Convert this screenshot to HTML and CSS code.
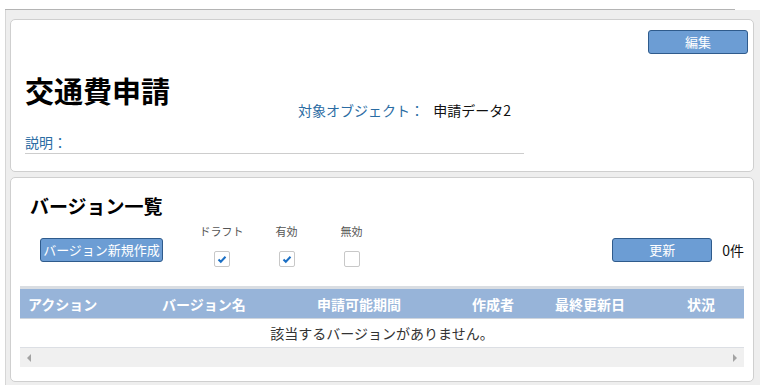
FILE: index.html
```html
<!DOCTYPE html>
<html lang="ja">
<head>
    <meta charset="UTF-8">
    <title>交通費申請</title>
    <link rel="stylesheet" href="styles.css">
</head>
<body>
    <div class="topline"></div>
    <div class="page">
        <div class="card detail">
            <div class="detail-actions">
                <button class="btn">編集</button>
            </div>
            <div class="detail-head">
                <h1 class="title">交通費申請</h1>
                <div class="target">
                    <span class="label">対象オブジェクト：</span>
                    <span class="value">申請データ2</span>
                </div>
            </div>
            <div class="desc">説明：</div>
        </div>

        <div class="card versions">
            <h2 class="section-title">バージョン一覧</h2>
            <div class="toolbar">
                <button class="btn btn-new">バージョン新規作成</button>
                <div class="filters">
                    <div class="filter">
                        <span class="filter-label">ドラフト</span>
                        <span class="check on"><svg viewBox="0 0 16 16" width="16" height="16"><path d="M4.5 8.5 L6.8 10.8 L11.5 5.8" fill="none" stroke="#1b6fc4" stroke-width="2"/></svg></span>
                    </div>
                    <div class="filter">
                        <span class="filter-label">有効</span>
                        <span class="check on"><svg viewBox="0 0 16 16" width="16" height="16"><path d="M4.5 8.5 L6.8 10.8 L11.5 5.8" fill="none" stroke="#1b6fc4" stroke-width="2"/></svg></span>
                    </div>
                    <div class="filter">
                        <span class="filter-label">無効</span>
                        <span class="check"></span>
                    </div>
                </div>
                <div class="spacer"></div>
                <button class="btn btn-refresh">更新</button>
                <span class="count">0件</span>
            </div>

            <div class="table-wrap">
                <table class="grid">
                    <colgroup>
                        <col style="width:134px">
                        <col style="width:155px">
                        <col style="width:155px">
                        <col style="width:83px">
                        <col style="width:132px">
                        <col>
                    </colgroup>
                    <thead>
                        <tr>
                            <th>アクション</th>
                            <th>バージョン名</th>
                            <th>申請可能期間</th>
                            <th>作成者</th>
                            <th>最終更新日</th>
                            <th>状況</th>
                        </tr>
                    </thead>
                    <tbody>
                        <tr>
                            <td class="empty" colspan="6">該当するバージョンがありません。</td>
                        </tr>
                    </tbody>
                </table>
                <div class="hscroll">
                    <span class="arrow left"></span>
                    <span class="arrow right"></span>
                </div>
            </div>
        </div>
    </div>
</body>
</html>
```

FILE: styles.css
```css
body {
    margin: 0;
    font-family: "Noto Sans CJK JP", "Noto Sans", sans-serif;
    font-size: 13px;
    color: #222;
    background: #fff;
}
.topline {
    margin: 9px 0 0 5px;
    width: 730px;
    height: 1px;
    background: #b4b4b4;
}
.page {
    margin-left: 5px;
    background: #eeeeee;
    border-left: 1px solid #d6d6d6;
    padding: 9px 6px 3px 4px;
}
.card {
    background: #fff;
    border: 1px solid #cfcfcf;
    border-radius: 5px;
}
.card + .card {
    margin-top: 5px;
}
.btn {
    display: block;
    font-family: inherit;
    font-size: 13px;
    line-height: 22px;
    height: 24px;
    padding: 0 2px;
    color: #fff;
    background: #6c9dd4;
    border: 1px solid #2f5b8c;
    border-radius: 3px;
}

/* detail card */
.detail {
    height: 151px;
    padding: 0 14px;
}
.detail-actions {
    display: flex;
    justify-content: flex-end;
    padding-top: 10px;
    margin-right: -9px;
}
.detail-actions .btn {
    width: 100px;
}
.detail-head {
    display: flex;
    align-items: flex-start;
    margin-top: 19px;
}
.title {
    margin: 0;
    width: 273px;
    font-size: 29px;
    line-height: 34px;
    font-weight: bold;
    color: #000;
}
.target {
    margin-top: 29px;
    font-size: 14px;
    line-height: 16px;
}
.target .label {
    color: #2b6ca3;
}
.target .value {
    margin-left: 6px;
    color: #111;
}
.desc {
    margin-top: 16px;
    width: 499px;
    font-size: 14px;
    line-height: 16px;
    padding-bottom: 3px;
    border-bottom: 1px solid #cdcdcd;
    color: #2b6ca3;
}

/* versions card */
.versions {
    height: 203px;
}
.section-title {
    margin: 16px 0 0 19px;
    font-size: 19px;
    line-height: 24px;
    font-weight: bold;
    color: #000;
}
.toolbar {
    display: flex;
    align-items: flex-start;
    margin-top: 6px;
    padding-left: 29px;
}
.btn-new {
    margin-top: 14px;
    width: 123px;
    white-space: nowrap;
}
.filters {
    display: flex;
    margin-left: 26px;
}
.filter {
    width: 65px;
    display: flex;
    flex-direction: column;
    align-items: center;
}
.filter-label {
    font-size: 11px;
    line-height: 14px;
    color: #555;
}
.check {
    margin-top: 13px;
    width: 14px;
    height: 14px;
    border: 1px solid #c8c8c8;
    border-radius: 2px;
    position: relative;
}
.check svg {
    position: absolute;
    top: -1px;
    left: -1px;
}
.spacer {
    flex: 1;
}
.btn-refresh {
    margin-top: 14px;
    width: 100px;
}
.count {
    margin: 18px 9px 0 10px;
    font-size: 14px;
    line-height: 16px;
    color: #111;
}
.table-wrap {
    margin: 19px 9px 0 9px;
}
.grid {
    width: 724px;
    border-collapse: collapse;
    table-layout: fixed;
    font-size: 14px;
}
.grid th {
    background: #97b4d9;
    color: #fff;
    font-weight: bold;
    text-align: left;
    height: 29px;
    padding: 0 0 0 8px;
    border-top: 3px solid #d9dde2;
    border-bottom: 1px solid #cfd5dd;
    white-space: nowrap;
}
.grid td.empty {
    text-align: center;
    height: 28px;
    padding: 0;
    border-bottom: 1px solid #dcdfe4;
    color: #333;
}
.hscroll {
    height: 19px;
    background: #f0f0f0;
    display: flex;
    align-items: center;
    justify-content: space-between;
    padding: 0 7px;
}
.arrow {
    width: 0;
    height: 0;
    border-top: 4px solid transparent;
    border-bottom: 4px solid transparent;
}
.arrow.left {
    border-right: 4px solid #a3a3a3;
}
.arrow.right {
    border-left: 4px solid #a3a3a3;
}
```
